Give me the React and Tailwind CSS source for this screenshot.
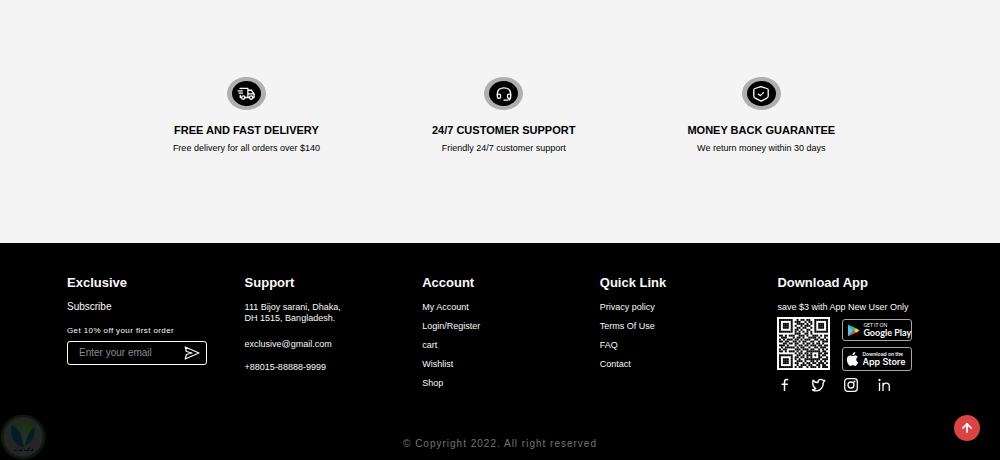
import React from 'react';
import { ArrowUp } from 'lucide-react';

const ACCOUNT_LINKS = ['My Account', 'Login/Register', 'cart', 'Wishlist', 'Shop'];
const QUICK_LINKS = ['Privacy policy', 'Terms Of Use', 'FAQ', 'Contact'];

const QR_ROWS = [
  '1111111001011011001111111',
  '1000001011100101101000001',
  '1011101001111010101011101',
  '1011101010010111001011101',
  '1011101001101100101011101',
  '1000001011010011001000001',
  '1111111010101010101111111',
  '0000000011100110100000000',
  '1101011100111010011101011',
  '0111000101101001111010010',
  '1010111011010111001101101',
  '1101100110101100110010111',
  '0011011011001011010110100',
  '1110100010110110111011011',
  '0101111101011001001101110',
  '1011000011101110110010101',
  '1101011101010011111110110',
  '0000000010110110100011011',
  '1111111001101011101010110',
  '1000001011011010100011001',
  '1011101010100111111110111',
  '1011101001110100110101010',
  '1011101011001011011011101',
  '1000001001011101100110110',
  '1111111010110010111010111'
];

const TruckIcon = () => (
  <svg viewBox="0 0 20 14" className="h-[13px] w-[19px]" fill="none" stroke="currentColor" strokeWidth="1.4" strokeLinecap="round" strokeLinejoin="round" aria-hidden="true">
    <path d="M3 1.5h8.5v9.8H8.6M11.5 3.5h3.8l2.9 3.8v4h-1.1M11.5 7.3h6.5M12.9 11.3h-1.4M1 4.2h4.4M2 6.6h3.6M3.3 9v2.3h1.1" />
    <circle cx="6.5" cy="11.4" r="1.8" />
    <circle cx="15" cy="11.4" r="1.8" />
  </svg>
);

const HeadsetIcon = () => (
  <svg viewBox="0 0 16 14" className="h-[14px] w-4" fill="none" stroke="currentColor" strokeWidth="1.3" strokeLinecap="round" strokeLinejoin="round" aria-hidden="true">
    <path d="M1.4 8.5V6.6C1.4 3 4.2 .8 8 .8s6.6 2.2 6.6 5.8v2.2M14.6 10c0 2-1.4 3.200-3.600 3.200H8" />
    <path d="M1.4 7.1h1.8c.8 0 1.3.5 1.3 1.2v1.8c0 .7-.5 1.2-1.3 1.2h-.5c-.8 0-1.3-.5-1.3-1.2zM14.6 7.1h-1.8c-.8 0-1.3.5-1.3 1.2v1.8c0 .7.5 1.2 1.3 1.2h.5c.8 0 1.3-.5 1.3-1.2z" />
  </svg>
);

const ShieldIcon = () => (
  <svg viewBox="0 0 16 16" className="h-4 w-4" fill="none" stroke="currentColor" strokeWidth="1.3" strokeLinecap="round" strokeLinejoin="round" aria-hidden="true">
    <path d="M8 .7 14 2.500c.7.2 1.200.6 1.200 1.300v6.200c0 1-.5 1.700-1.400 2.200L8 15.200 2.200 12.200C1.300 11.700.8 11 .8 10V3.800c0-.7.5-1.100 1.200-1.300z" />
    <path d="m5.500 8.200 1.800 1.400 3.200-3" />
  </svg>
);

const FEATURES = [
  { title: 'FREE AND FAST DELIVERY', text: 'Free delivery for all orders over $140', Icon: TruckIcon },
  { title: '24/7 CUSTOMER SUPPORT', text: 'Friendly 24/7 customer support', Icon: HeadsetIcon },
  { title: 'MONEY BACK GUARANTEE', text: 'We return money within 30 days', Icon: ShieldIcon }
];

const FacebookIcon = () => (
  <svg viewBox="0 0 16 16" className="h-4 w-4" fill="none" stroke="currentColor" strokeWidth="1.5" aria-hidden="true">
    <path d="M11.3 2.5H9.8C8.3 2.5 7.5 3.4 7.5 5v9M4.5 7.3h6.3" />
  </svg>
);

const TwitterIcon = () => (
  <svg viewBox="0 0 16 16" className="h-4 w-4" fill="none" stroke="currentColor" strokeWidth="1.4" strokeLinejoin="round" strokeLinecap="round" aria-hidden="true">
    <path d="M3 3.2C4.300 4.900 6 5.700 8 5.600 7.800 3.700 9.100 2.400 10.700 2.400c.9 0 1.600.4 2.100 1h2l-1.500 2.200c.1 4.800-3 8.300-7 8.300-1.500 0-2.800-.4-3.900-1.100 1.500 0 2.600-.5 3.400-1.300C3.300 10.100 2.300 6.900 3 3.200z" />
  </svg>
);

const InstagramIcon = () => (
  <svg viewBox="0 0 16 16" className="h-4 w-4" fill="none" stroke="currentColor" strokeWidth="1.3" aria-hidden="true">
    <rect x="1.7" y="1.7" width="12.6" height="12.6" rx="2.8" />
    <circle cx="8" cy="8" r="3" />
    <circle cx="11.5" cy="4.5" r=".4" />
  </svg>
);

const LinkedinIcon = () => (
  <svg viewBox="0 0 16 16" className="h-4 w-4" fill="none" stroke="currentColor" strokeWidth="1.3" aria-hidden="true">
    <path d="M3.5 5.8V14M7 5.8V14M7 9.5c0-2.200 1.300-3.400 3.200-3.400s3.100 1.200 3.100 3.300V14" />
    <circle cx="3.5" cy="3" r=".5" fill="currentColor" />
  </svg>
);

const SOCIALS = [
  { name: 'Facebook', Icon: FacebookIcon },
  { name: 'Twitter', Icon: TwitterIcon },
  { name: 'Instagram', Icon: InstagramIcon },
  { name: 'LinkedIn', Icon: LinkedinIcon }
];

const QrCode = () => (
  <svg viewBox="0 0 27 27" className="h-[53px] w-[53px] shrink-0" role="img" aria-label="Download QR code">
    <rect width="27" height="27" fill="#fff" />
    {QR_ROWS.map((row, y) =>
      row.split('').map((cell, x) =>
        cell === '1' ? <rect key={`${x}-${y}`} x={x + 1} y={y + 1} width="1" height="1" fill="#000" /> : null
      )
    )}
  </svg>
);

const PlayLogo = () => (
  <svg viewBox="0 0 14 15" className="h-[15px] w-[13px] shrink-0" aria-hidden="true">
    <path d="M1 1v13l6.5-6.5z" fill="#4fc3e8" />
    <path d="M1 1l6.5 6.5 2.3-2.4z" fill="#38c781" />
    <path d="M1 14l6.5-6.5 2.3 2.4z" fill="#ef4655" />
    <path d="M9.8 5.1 7.5 7.5l2.3 2.4 3.7-2.4z" fill="#fdd032" />
  </svg>
);

const AppleLogo = () => (
  <svg viewBox="2.500 0 19 24" className="h-[14px] w-[11px] shrink-0" fill="currentColor" aria-hidden="true">
    <path d="M12.150 6.900c-.95 0-2.420-1.080-3.960-1.040-2.040.03-3.910 1.180-4.960 3.010-2.120 3.680-.55 9.100 1.520 12.090 1.010 1.450 2.210 3.090 3.790 3.040 1.520-.07 2.090-.99 3.940-.99 1.830 0 2.350.99 3.960.95 1.640-.03 2.680-1.480 3.680-2.950 1.160-1.690 1.640-3.330 1.660-3.420-.04-.01-3.180-1.220-3.220-4.860-.03-3.040 2.480-4.490 2.600-4.560-1.430-2.090-3.620-2.320-4.390-2.380-2-.16-3.680 1.090-4.620 1.090zM15.530 3.830c.84-1.010 1.400-2.430 1.250-3.830-1.210.05-2.660.81-3.530 1.820-.78.90-1.450 2.340-1.270 3.710 1.340.10 2.720-.69 3.550-1.700" />
  </svg>
);

const FooterHeading = ({ children }) => (
  <h2 className="text-[13px] leading-4 font-bold">{children}</h2>
);

const LinkColumn = ({ title, links }) => (
  <nav aria-label={title}>
    <FooterHeading>{title}</FooterHeading>
    <ul className="mt-[10px] flex flex-col gap-[7px] text-[9px] leading-3">
      {links.map((link) => (
        <li key={link}>
          <a href="#" className="hover:underline">{link}</a>
        </li>
      ))}
    </ul>
  </nav>
);

const SiteEmblem = () => (
  <svg viewBox="0 0 48 48" className="fixed bottom-0 left-0 h-[46px] w-[46px]" aria-hidden="true">
    <circle cx="24" cy="24" r="23.5" fill="#0d1a08" />
    <circle cx="24" cy="24" r="20.5" fill="#232527" />
    <path d="M12 12c5 0 9-1 12-4 3 3 7 4 12 4v8c0 7-5 12-12 15-7-3-12-8-12-15z" fill="#14330e" />
    <path d="M12 12c7 2 11 9 13 21l-1 2c-7-3-12-8-12-15z" fill="#071b27" />
    <path d="M24 12c-3 4-3 11 1 21 4-7 5-14-1-21z" fill="#292c2d" />
    <path d="M36 13c-5 5-8 11-10 20 6-3 10-8 10-14z" fill="#071b27" />
    <path d="M14 38h3v-1m2 1h4v-1m2 1h5v-3m2 3h2v-2" fill="none" stroke="#070909" />
  </svg>
);

const App = () => {
  const scrollToTop = () => window.scrollTo({ top: 0, behavior: 'smooth' });

  return (
    <div className="flex min-h-screen flex-col bg-black font-['Liberation_Sans',Arial,sans-serif]">
      <section className="flex justify-center gap-[112px] bg-[#f4f4f4] pt-[77px] pb-[87px] pl-2 text-center text-black">
        {FEATURES.map(({ title, text, Icon }) => (
          <div key={title} className="flex flex-col items-center">
            <div className="flex h-[33px] w-[39px] items-center justify-center rounded-[50%] bg-[#afafaf]">
              <div className="flex h-[25px] w-[29px] items-center justify-center rounded-[50%] bg-black text-white">
                <Icon />
              </div>
            </div>
            <h3 className="mt-3 text-[11px] leading-4 font-bold">{title}</h3>
            <p className="mt-[2px] text-[9px] leading-4">{text}</p>
          </div>
        ))}
      </section>

      <footer className="bg-black px-[67px] pt-8 pb-[10px] text-[#fafafa]">
        <div className="grid grid-cols-5 gap-x-[22px]">
          <div>
            <FooterHeading>Exclusive</FooterHeading>
            <p className="mt-[10px] text-[10px] leading-3">Subscribe</p>
            <label htmlFor="email" className="mt-3 block text-[8px] leading-3 tracking-wider">
              Get 10% off your first order
            </label>
            <form
              onSubmit={(e) => e.preventDefault()}
              className="mt-1 flex h-6 w-[140px] items-center rounded-[3px] border border-white pr-[6px] pl-[11px]"
            >
              <input
                id="email"
                type="email"
                placeholder="Enter your email"
                className="w-full min-w-0 bg-transparent text-[10px] leading-3 placeholder:text-[#858b95] focus:outline-none"
              />
              <button type="submit" aria-label="Send">
                <svg viewBox="0 0 16 14" className="h-[14px] w-4" fill="none" stroke="currentColor" strokeWidth="1.2" strokeLinejoin="round" aria-hidden="true">
                  <path d="M1.2 1 15 7 1.2 13l1.2-4.500L8 7 2.400 5.500z" />
                </svg>
              </button>
            </form>
          </div>

          <div>
            <FooterHeading>Support</FooterHeading>
            <address className="mt-[11px] text-[9px] leading-[11px] not-italic">
              <p>111 Bijoy sarani, Dhaka,<br />DH 1515, Bangladesh.</p>
              <p className="mt-[15px]">exclusive@gmail.com</p>
              <p className="mt-3">+88015-88888-9999</p>
            </address>
          </div>

          <LinkColumn title="Account" links={ACCOUNT_LINKS} />
          <LinkColumn title="Quick Link" links={QUICK_LINKS} />

          <div>
            <FooterHeading>Download App</FooterHeading>
            <p className="mt-[10px] text-[9px] leading-3 whitespace-nowrap">save $3 with App New User Only</p>
            <div className="mt-1 flex items-start gap-3">
              <QrCode />
              <div className="mt-[2px] flex flex-col gap-[6px]">
                <a href="#" className="flex h-[22px] w-[70px] items-center gap-[3px] rounded-[3px] border border-[#a6a6a6] bg-black pl-1 font-['Lato',sans-serif]">
                  <PlayLogo />
                  <span className="flex flex-col whitespace-nowrap">
                    <span className="text-[5px] leading-[6px]">GET IT ON</span>
                    <span className="text-[9px] leading-[10px] font-bold">Google Play</span>
                  </span>
                </a>
                <a href="#" className="flex h-6 w-[70px] items-center gap-1 rounded-[3px] border border-[#a6a6a6] bg-black pl-1 font-['Inter',sans-serif]">
                  <AppleLogo />
                  <span className="flex flex-col whitespace-nowrap">
                    <span className="text-[5px] leading-[6px] font-semibold">Download on the</span>
                    <span className="text-[9px] leading-[10px] font-semibold">App Store</span>
                  </span>
                </a>
              </div>
            </div>
            <div className="mt-[6px] flex gap-[17px]">
              {SOCIALS.map(({ name, Icon }) => (
                <a key={name} href="#" aria-label={name}>
                  <Icon />
                </a>
              ))}
            </div>
          </div>
        </div>

        <p className="mt-[45px] text-center text-[10px] leading-3 tracking-widest text-[#747474]">
          © Copyright 2022. All right reserved
        </p>
      </footer>

      <SiteEmblem />
      <button
        type="button"
        onClick={scrollToTop}
        aria-label="Back to top"
        className="fixed right-5 bottom-[19px] flex h-[26px] w-[26px] items-center justify-center rounded-full bg-[#db4444] text-white hover:bg-[#e05555]"
      >
        <ArrowUp size={14} strokeWidth={3} />
      </button>
    </div>
  );
};

export default App;
